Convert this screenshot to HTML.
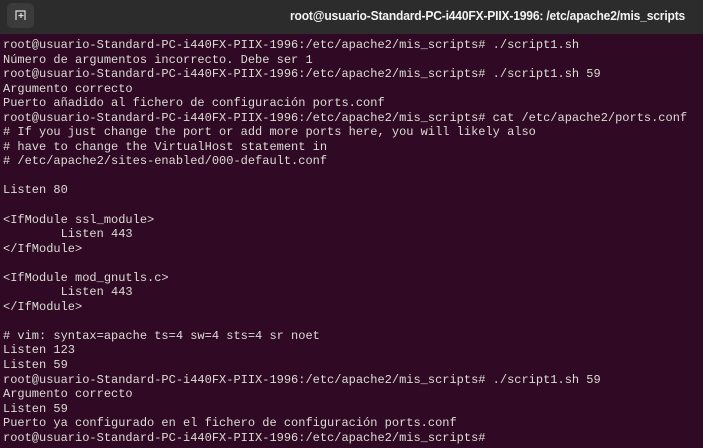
<!DOCTYPE html>
<html><head><meta charset="utf-8"><style>
html,body{margin:0;padding:0;width:703px;height:448px;overflow:hidden;background:#300a24;}
.bar{position:absolute;left:0;top:0;width:703px;height:34px;background:#2c2c2c;}
.btn{position:absolute;left:7px;top:3px;width:27px;height:25px;background:#3b3b3b;border-radius:5px;}
.title{position:absolute;left:290px;top:8px;font:bold 13px "Liberation Sans",sans-serif;color:#f2f2f2;white-space:nowrap;letter-spacing:-0.2px;transform:scaleX(0.93);transform-origin:0 0;}
pre{position:absolute;left:3px;top:38px;margin:0;font:12px/14.55px "Liberation Mono",monospace;color:#dcdcd6;}
</style></head><body>
<div class="bar"><div class="btn"><svg width="27" height="25" viewBox="0 0 27 25"><path d="M9 17V8h9v9M11.5 12.5h5M14 10v5" stroke="#ddd" stroke-width="1.2" fill="none"/></svg></div>
<div class="title">root@usuario-Standard-PC-i440FX-PIIX-1996: /etc/apache2/mis_scripts</div></div>
<pre>root@usuario-Standard-PC-i440FX-PIIX-1996:/etc/apache2/mis_scripts# ./script1.sh
Número de argumentos incorrecto. Debe ser 1
root@usuario-Standard-PC-i440FX-PIIX-1996:/etc/apache2/mis_scripts# ./script1.sh 59
Argumento correcto
Puerto añadido al fichero de configuración ports.conf
root@usuario-Standard-PC-i440FX-PIIX-1996:/etc/apache2/mis_scripts# cat /etc/apache2/ports.conf
# If you just change the port or add more ports here, you will likely also
# have to change the VirtualHost statement in
# /etc/apache2/sites-enabled/000-default.conf

Listen 80

&lt;IfModule ssl_module&gt;
        Listen 443
&lt;/IfModule&gt;

&lt;IfModule mod_gnutls.c&gt;
        Listen 443
&lt;/IfModule&gt;

# vim: syntax=apache ts=4 sw=4 sts=4 sr noet
Listen 123
Listen 59
root@usuario-Standard-PC-i440FX-PIIX-1996:/etc/apache2/mis_scripts# ./script1.sh 59
Argumento correcto
Listen 59
Puerto ya configurado en el fichero de configuración ports.conf
root@usuario-Standard-PC-i440FX-PIIX-1996:/etc/apache2/mis_scripts# </pre>
</body></html>
